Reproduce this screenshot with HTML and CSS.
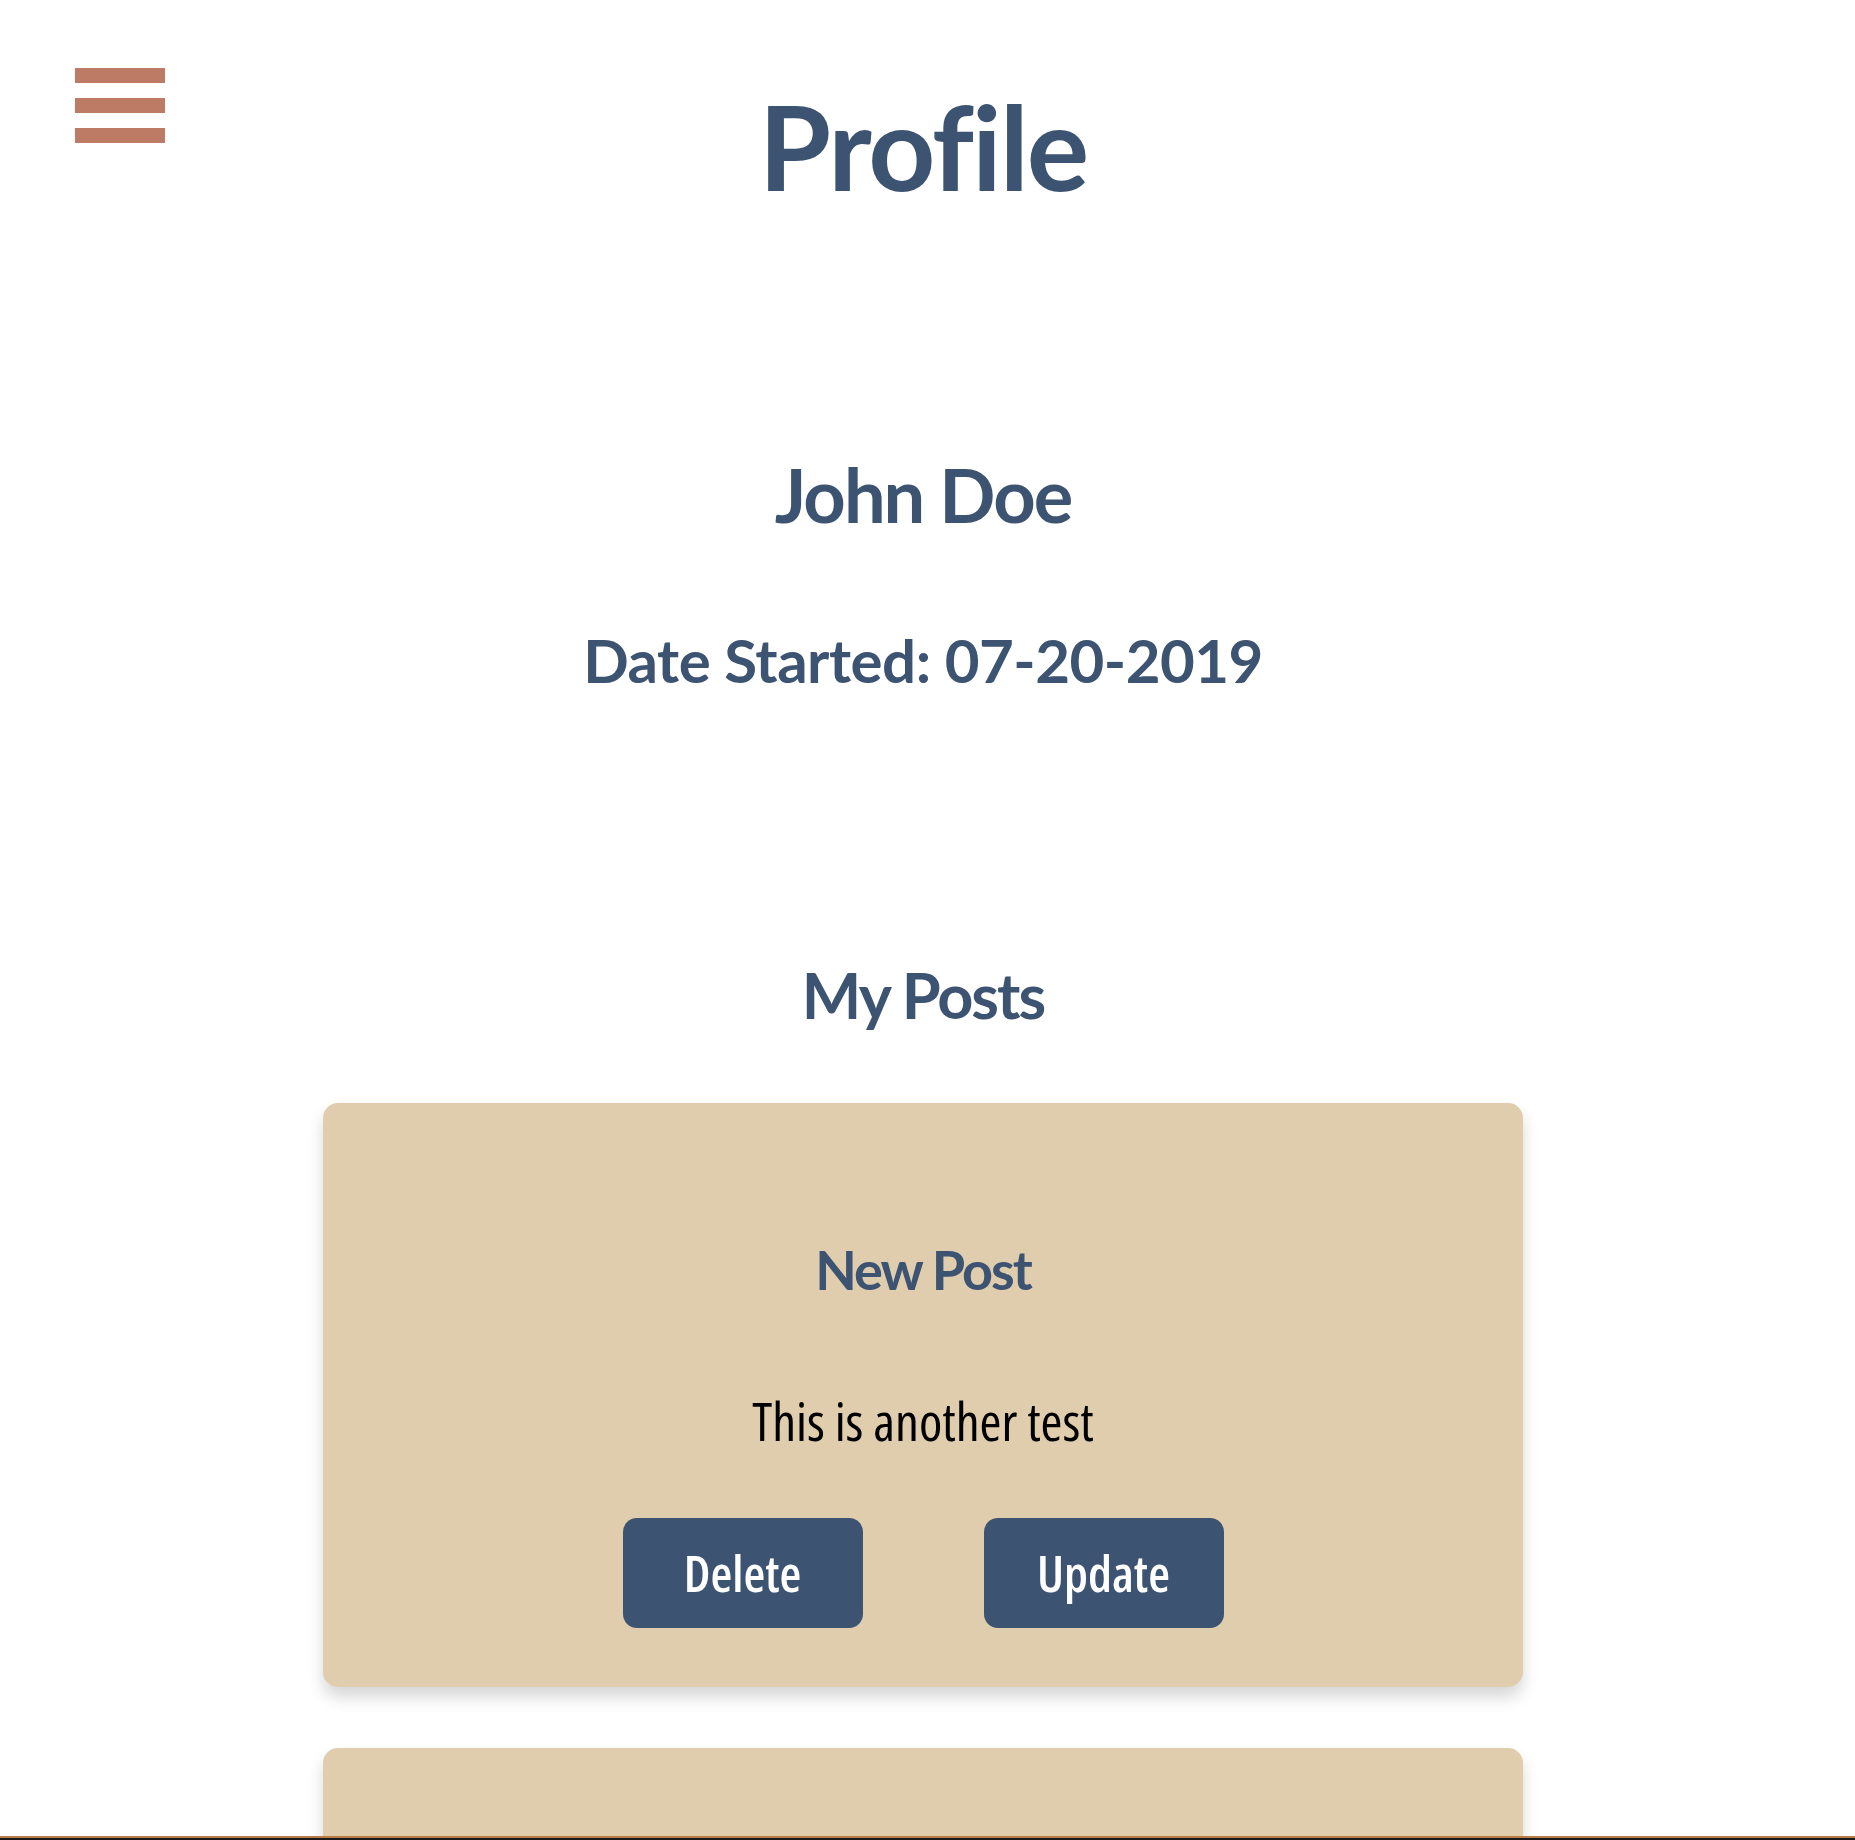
FILE: index.html
```html
<!DOCTYPE html>
<html lang="en">
<head>
<meta charset="utf-8">
<title>Profile</title>
<link rel="stylesheet" href="styles.css">
</head>
<body>
<div class="page">
  <header class="topbar">
    <button class="menu-toggle" aria-label="Menu">
      <span class="bar"></span>
      <span class="bar"></span>
      <span class="bar"></span>
    </button>
    <h1 class="page-title">Profile</h1>
    <div class="spacer"></div>
  </header>

  <section class="user-info">
    <h2 class="user-name">John Doe</h2>
    <h3 class="user-date">Date Started: 07-20-2019</h3>
  </section>

  <section class="posts">
    <h2 class="posts-title">My Posts</h2>
    <article class="post-card">
      <h3 class="post-title">New Post</h3>
      <p class="post-body">This is another test</p>
      <div class="post-actions">
        <button class="btn">Delete</button>
        <button class="btn">Update</button>
      </div>
    </article>
    <article class="post-card post-card--next"></article>
  </section>
</div>
<footer class="footer-bar"></footer>
</body>
</html>
```
FILE: styles.css
```css
html, body {
  margin: 0;
  padding: 0;
  background: #ffffff;
}

body {
  font-family: "Lato", "Noto Sans", sans-serif;
  color: #3d5372;
}

.page {
  padding-right: 9px;
  display: flex;
  flex-direction: column;
  align-items: center;
}

.topbar {
  width: 100%;
  display: grid;
  grid-template-columns: 1fr auto 1fr;
  align-items: start;
}

.menu-toggle {
  justify-self: start;
  margin: 68px 0 0 75px;
  padding: 0;
  border: 0;
  background: transparent;
  display: flex;
  flex-direction: column;
  gap: 15px;
  cursor: pointer;
}

.bar {
  display: block;
  width: 90px;
  height: 15px;
  background: #bd7b65;
}

.page-title {
  margin: 88px 0 0;
  font-size: 117px;
  line-height: 1;
  font-weight: 700;
  letter-spacing: -2px;
  text-align: center;
}

.user-info {
  display: flex;
  flex-direction: column;
  align-items: center;
}

.user-name {
  margin: 253px 0 0;
  font-size: 74px;
  line-height: 1;
  font-weight: 700;
  letter-spacing: -2px;
}

.user-date {
  margin: 98px 0 0;
  font-size: 60px;
  line-height: 1;
  font-weight: 700;
  letter-spacing: -0.5px;
}

.posts {
  width: 1200px;
  display: flex;
  flex-direction: column;
  align-items: center;
}

.posts-title {
  margin: 273px 0 77px;
  font-size: 63px;
  line-height: 1;
  font-weight: 700;
  letter-spacing: -2px;
}

.post-card {
  width: 100%;
  box-sizing: border-box;
  background: #dfcdae;
  border-radius: 15px;
  box-shadow: 0 10px 16px rgba(0, 0, 0, 0.16);
  padding: 140px 0 59px;
  margin-bottom: 61px;
  display: flex;
  flex-direction: column;
  align-items: center;
}

.post-card--next {
  min-height: 584px;
}

.post-title {
  margin: 0;
  font-size: 54px;
  line-height: 1;
  font-weight: 700;
  letter-spacing: -2px;
}

.post-body {
  margin: 97px 0 0;
  font-family: "Open Sans", "Noto Sans", sans-serif;
  font-stretch: 75%;
  font-size: 53px;
  line-height: 1;
  color: #000000;
}

.post-actions {
  margin-top: 71px;
  display: flex;
  gap: 121px;
}

.btn {
  width: 240px;
  height: 110px;
  border: 0;
  border-radius: 14px;
  background: #3d5372;
  color: #ffffff;
  font-family: "Open Sans", "Noto Sans", sans-serif;
  font-stretch: 75%;
  font-weight: 600;
  font-size: 50px;
  padding: 0;
  cursor: pointer;
}

.footer-bar {
  position: fixed;
  left: 0;
  right: 0;
  bottom: 0;
  height: 2px;
  background: #1a1a1a;
  border-top: 2px solid #b97c47;
}
```
